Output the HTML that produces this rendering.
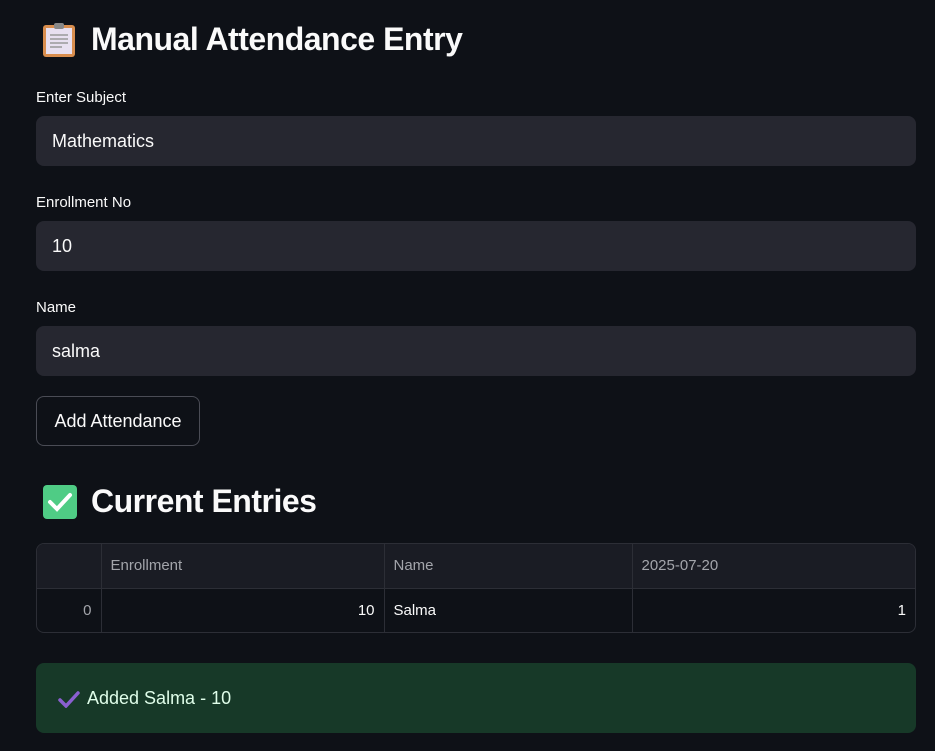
<!DOCTYPE html>
<html><head><meta charset="utf-8"><style>
body{margin:0;width:935px;height:751px;background:#0e1117;font-family:"Liberation Sans","DejaVu Sans",sans-serif;color:#fafafa;position:relative;overflow:hidden}
.a{position:absolute}
h1{position:absolute;margin:0;font-size:32px;font-weight:bold;letter-spacing:-0.5px}
.lbl{position:absolute;left:36px;font-size:15px}
.inp{position:absolute;left:36px;width:880px;height:50px;background:#262730;border-radius:8px;font-size:18px;line-height:50px;box-sizing:border-box;padding-left:16px}
table{border-collapse:collapse;font-size:15px}
td{border-left:1px solid #2c2e36;height:44px;box-sizing:border-box;padding:0 9px}
td:first-child{border-left:none}
tr+tr td{border-top:1px solid #2c2e36}
</style></head><body>
<svg class="a" style="left:42px;top:22px" width="34" height="36" viewBox="0 0 34 36"><rect x="1" y="3" width="32" height="32" rx="3" fill="#d98e4e"/><rect x="4" y="6" width="26" height="26" fill="#e8e0f0"/><rect x="12" y="1" width="10" height="6" rx="2" fill="#888"/><g stroke="#999" stroke-width="1.5"><line x1="8" y1="13" x2="26" y2="13"/><line x1="8" y1="17" x2="26" y2="17"/><line x1="8" y1="21" x2="26" y2="21"/><line x1="8" y1="25" x2="20" y2="25"/></g></svg>
<h1 style="left:91px;top:21px">Manual Attendance Entry</h1>
<div class="lbl" style="top:89px">Enter Subject</div>
<div class="inp" style="top:116px">Mathematics</div>
<div class="lbl" style="top:194px">Enrollment No</div>
<div class="inp" style="top:221px">10</div>
<div class="lbl" style="top:299px">Name</div>
<div class="inp" style="top:326px">salma</div>
<div class="a" style="left:36px;top:396px;width:164px;height:50px;border:1px solid #4a4c55;border-radius:8px;box-sizing:border-box;font-size:18px;line-height:48px;text-align:center">Add Attendance</div>
<svg class="a" style="left:42px;top:484px" width="36" height="36" viewBox="0 0 36 36"><rect x="1" y="1" width="34" height="34" rx="4" fill="#4fcc85"/><path d="M8 18 L15 25 L28 11" stroke="#fff" stroke-width="4" fill="none" stroke-linecap="round"/></svg>
<h1 style="left:91px;top:483px">Current Entries</h1>
<div class="a" style="left:36px;top:543px;width:880px;height:90px;border:1px solid #2c2e36;border-radius:8px;overflow:hidden;box-sizing:border-box">
<table style="width:878px">
<tr style="background:#1a1c24;color:#a3a5ab"><td style="width:64px"></td><td style="width:283px">Enrollment</td><td style="width:248px">Name</td><td>2025-07-20</td></tr>
<tr><td style="text-align:right;color:#a3a5ab">0</td><td style="text-align:right">10</td><td>Salma</td><td style="text-align:right">1</td></tr>
</table></div>
<div class="a" style="left:36px;top:663px;width:880px;height:70px;background:#173928;border-radius:8px;font-size:18px;line-height:70px;color:#dffde9">
<svg class="a" style="left:22px;top:27px" width="22" height="18" viewBox="0 0 22 18"><path d="M2 10 L8 16 L20 3" stroke="#8a5fd0" stroke-width="3.5" fill="none" stroke-linecap="round"/></svg>
<span style="position:absolute;left:51px">Added Salma - 10</span></div>
</body></html>
